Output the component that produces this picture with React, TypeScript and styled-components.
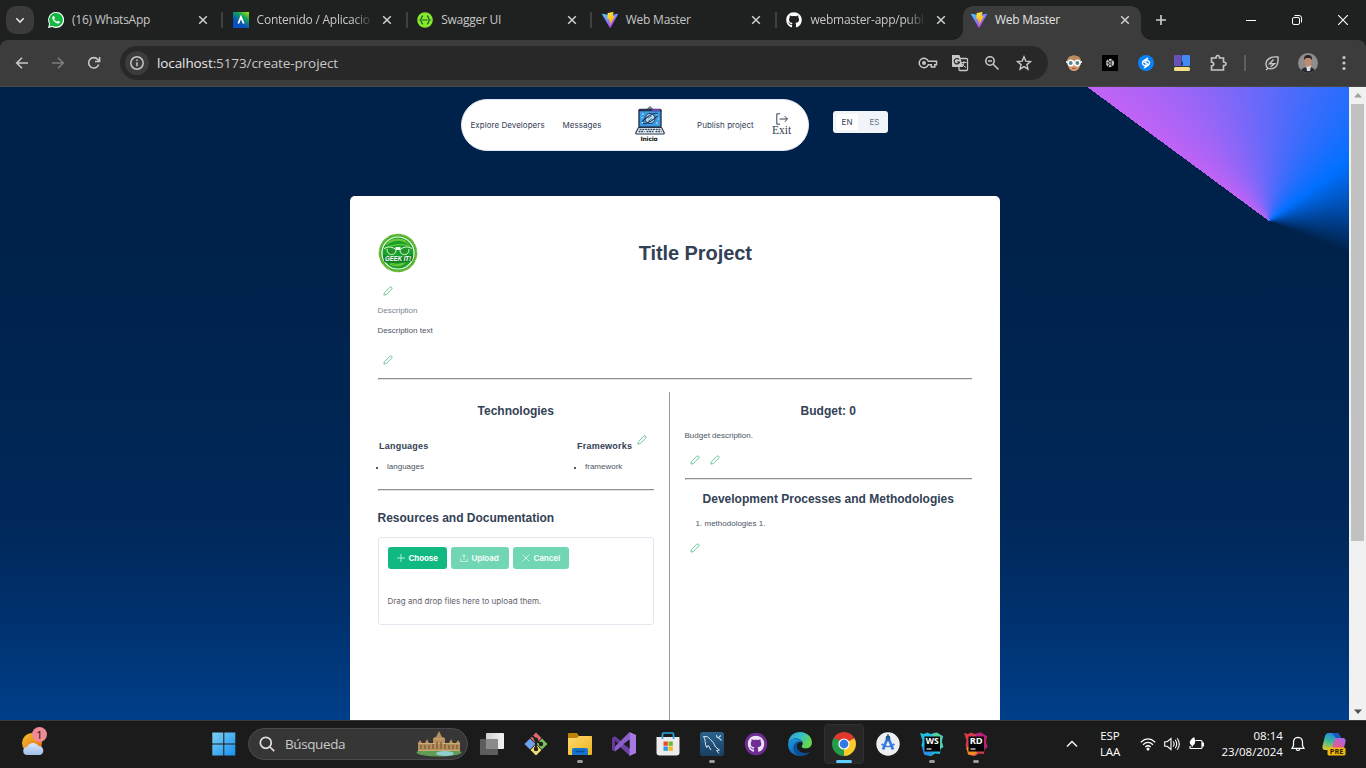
import React from 'react';
import styled, { createGlobalStyle, css } from 'styled-components';
import { FaGithub } from 'react-icons/fa';

const GlobalStyle = createGlobalStyle`
  * { box-sizing: border-box; }
  body { margin: 0; overflow: hidden; font-family: 'Open Sans', 'Noto Sans', sans-serif; }
  svg { display: block; flex: none; }
  h1, h2, h3, p, ul, ol { margin: 0; padding: 0; font-weight: 400; }
`;

const Screen = styled.div`
  width: 1366px;
  height: 768px;
  display: flex;
  flex-direction: column;
  overflow: hidden;
  background: #1f2120;
`;

/* ---------- Browser chrome ---------- */

const TabStrip = styled.div`
  height: 40px;
  flex: none;
  display: flex;
  padding: 6px 0 0 6px;
  background: #1f2120;
`;

const TabSearch = styled.div`
  width: 28px;
  height: 28px;
  margin-right: 6px;
  border-radius: 10px;
  background: #3b3b3b;
  display: flex;
  align-items: center;
  justify-content: center;
`;

const TabSlot = styled.div<{ $active?: boolean }>`
  position: relative;
  flex: none;
  width: ${p => (p.$active ? 178 : 184.6)}px;
  height: ${p => (p.$active ? 34 : 28)}px;
  padding: 0 0 ${p => (p.$active ? 6 : 0)}px 8px;
  display: flex;
  align-items: center;
  color: ${p => (p.$active ? '#e3e3e3' : '#c7c7c7')};
  ${p => p.$active && css`
    background: #3c3c3c;
    border-radius: 10px 10px 0 0;
    &::before, &::after {
      content: '';
      position: absolute;
      bottom: 0;
      width: 10px;
      height: 10px;
    }
    &::before { left: -10px; background: radial-gradient(circle at 0 0, transparent 9.5px, #3c3c3c 10px); }
    &::after { right: -10px; background: radial-gradient(circle at 100% 0, transparent 9.5px, #3c3c3c 10px); }
  `}
`;

const TabTitle = styled.span<{ $fade?: boolean }>`
  width: 114px;
  margin-left: 8px;
  font-size: 12px;
  line-height: 20px;
  letter-spacing: -0.24px;
  white-space: nowrap;
  ${p => p.$fade && css`mask-image: linear-gradient(90deg, #000 96px, transparent 116px);`}
`;

const TabClose = styled.span`
  width: 16px;
  margin-left: 8.5px;
  display: flex;
  justify-content: center;
`;

const TabDivider = styled.span`
  width: 2px;
  height: 16px;
  margin-left: 10.5px;
  background: #3f4140;
`;

const NewTab = styled.div`
  width: 40px;
  height: 28px;
  display: flex;
  align-items: center;
  justify-content: center;
`;

const WindowButtons = styled.div`
  display: flex;
  height: 28px;
  margin-left: auto;
  > div {
    width: 46px;
    display: flex;
    align-items: center;
    justify-content: center;
  }
`;

const ToolbarBack = styled.div`
  height: 47px;
  flex: none;
  background: #1f2120;
`;

const Toolbar = styled.div`
  height: 47px;
  display: flex;
  align-items: center;
  padding: 0 4px;
  background: #3c3c3c;
  border-radius: 8px 8px 0 0;
  border-bottom: 1px solid #474747;
`;

const ToolButton = styled.div<{ $w?: number }>`
  width: ${p => p.$w ?? 36}px;
  height: 34px;
  display: flex;
  align-items: center;
  justify-content: center;
`;

const Omnibox = styled.div`
  width: 928px;
  height: 34px;
  margin: 0 8px;
  padding: 0 8px 0 5px;
  border-radius: 17px;
  background: #282828;
  display: flex;
  align-items: center;
`;

const SiteInfo = styled.div`
  width: 24px;
  height: 24px;
  border-radius: 50%;
  background: #3c3c3c;
  display: flex;
  align-items: center;
  justify-content: center;
`;

const Url = styled.div`
  margin-left: 8px;
  margin-right: auto;
  font-size: 13.5px;
  letter-spacing: -0.1px;
  color: #c7c7c7;
  b { font-weight: 400; color: #e8e8e8; }
`;

const ToolDivider = styled.div`
  width: 2px;
  height: 16px;
  margin: 0 8px;
  background: #5e5e5e;
`;

/* ---------- Web page ---------- */

const Viewport = styled.div`
  height: 633px;
  flex: none;
  display: flex;
`;

const Page = styled.main`
  width: 1349px;
  display: flex;
  flex-direction: column;
  background:
    conic-gradient(from 306.4deg at 1269px 134px, #c063f5 0deg, #0070ff 107deg, #002149 166deg, transparent 166deg) no-repeat 0 0 / 1349px 190px,
    linear-gradient(#002149 0, #002149 150px, #00285a 440px, #003270 540px, #003f8a 633px);
`;

const Header = styled.header`
  display: flex;
  padding: 12px 0 0 461px;
`;

const NavPill = styled.nav`
  width: 348px;
  height: 52px;
  border-radius: 26px;
  border: 1px solid #e2e8f0;
  background: #fff;
  display: flex;
  align-items: center;
  padding-left: 8.5px;
`;

const NavLink = styled.span<{ $w: number }>`
  width: ${p => p.$w}px;
  font: 400 8px Inter, sans-serif;
  letter-spacing: 0.04px;
  line-height: 16px;
  color: #334155;
  white-space: nowrap;
`;

const HomeLogo = styled.div`
  width: 62px;
  height: 38px;
  display: flex;
  flex-direction: column;
  align-items: flex-start;
  span {
    width: 28px;
    text-align: center;
    font: 700 6px/7px 'DejaVu Sans', sans-serif;
    letter-spacing: -0.2px;
    color: #111;
  }
`;

const ExitLink = styled.div`
  width: 24px;
  margin: 0 0 1px 10.5px;
  display: flex;
  flex-direction: column;
  align-items: center;
  font: 11.5px/11px 'Liberation Serif', serif;
  color: #334155;
`;

const LangSwitch = styled.div`
  width: 55px;
  height: 22px;
  margin: 12px 0 0 24px;
  padding: 3px;
  border-radius: 3px;
  background: #f1f5f9;
  display: flex;
`;

const LangOption = styled.span<{ $on?: boolean }>`
  flex: none;
  width: ${p => (p.$on ? 22 : 33)}px;
  height: 16px;
  border-radius: 3px;
  background: ${p => (p.$on ? '#fff' : 'transparent')};
  color: ${p => (p.$on ? '#334155' : '#64748b')};
  font: 8px/16px Inter, sans-serif;
  text-align: center;
`;

const Card = styled.section`
  width: 650px;
  margin: 45px 0 0 350px;
  flex: 1;
  padding: 37px 28px 0 27.5px;
  border-radius: 5px 5px 0 0;
  background: #fff;
  display: flex;
  flex-direction: column;
  font: 8px/20px 'Liberation Sans', Arial, sans-serif;
  color: #4b5563;
`;

const TitleRow = styled.div`
  height: 40px;
  display: flex;
  align-items: center;
`;

const Title = styled.h1`
  flex: 1;
  text-align: center;
  font-weight: 700;
  font-size: 20px;
  letter-spacing: -0.07px;
  padding-left: 1px;
  color: #334155;
`;

const PencilRow = styled.div<{ $top?: number }>`
  height: 20px;
  margin-top: ${p => p.$top ?? 0}px;
  padding-left: 5px;
  display: flex;
  align-items: center;
  gap: 10px;
`;

const Line = styled.p<{ $top?: number; $soft?: boolean }>`
  height: 20px;
  margin-top: ${p => p.$top ?? 0}px;
  color: ${p => (p.$soft ? '#7b8494' : '#4b5563')};
`;

const Rule = styled.div<{ $top: number }>`
  height: 2px;
  flex: none;
  margin-top: ${p => p.$top}px;
  border-top: 1px solid #8f8f8f;
  border-left: 1px solid #8f8f8f;
  border-bottom: 1px solid #e4e4e4;
`;

const Columns = styled.div`
  flex: 1;
  margin-top: 12px;
  display: flex;
`;

const LeftColumn = styled.div`
  width: 292.5px;
  padding-right: 15px;
  border-right: 1px solid #9b9b9b;
`;

const RightColumn = styled.div`
  flex: 1;
  padding-left: 14.5px;
`;

const Heading = styled.h2<{ $top: number; $left?: boolean }>`
  height: 20px;
  margin-top: ${p => p.$top}px;
  text-align: ${p => (p.$left ? 'left' : 'center')};
  font-size: 12px;
  font-weight: 700;
  color: #334155;
  white-space: nowrap;
`;

const TechGrid = styled.div`
  height: 45px;
  margin-top: 11px;
  display: flex;
  > svg { margin-top: 3px; }
`;

const TechGroup = styled.div<{ $w: number }>`
  width: ${p => p.$w}px;
  padding-top: 4px;
  h3 {
    height: 21px;
    padding-left: 1.5px;
    font-size: 9px;
    font-weight: 700;
    letter-spacing: 0.22px;
    color: #334155;
  }
  ul { list-style: none; }
  li { height: 20px; display: flex; align-items: center; }
  li::before {
    content: '';
    width: 2px;
    height: 2px;
    margin: 1px 9.5px 0 -2px;
    background: #4b5563;
  }
`;

const NumberedLine = styled.ol`
  height: 20px;
  margin-top: 5px;
  padding-left: 20px;
`;

const UploadPanel = styled.div`
  height: 88px;
  margin-top: 9px;
  padding: 9px;
  border: 1px solid #e2e8f0;
  border-radius: 3px;
  font: 8px/20px Inter, sans-serif;
  p { margin-top: 22px; color: #64616f; letter-spacing: 0.03px; }
`;

const ButtonRow = styled.div`
  display: flex;
  gap: 4px;
`;

const UploadButton = styled.div<{ $w: number; $off?: boolean }>`
  width: ${p => p.$w}px;
  height: 22px;
  padding-left: 9px;
  display: flex;
  align-items: center;
  gap: 4px;
  border-radius: 3px;
  background: ${p => (p.$off ? '#70d6b3' : '#10b981')};
  color: ${p => (p.$off ? '#f0fbf7' : '#fff')};
  font-weight: 700;
  letter-spacing: -0.1px;
`;

const Scrollbar = styled.div`
  width: 17px;
  padding: 0 2px;
  background: #f1f1f1;
  display: flex;
  flex-direction: column;
  align-items: center;
`;

const ScrollArrow = styled.div`
  height: 17px;
  display: flex;
  align-items: center;
`;

const ScrollThumb = styled.div`
  width: 13px;
  height: 437px;
  margin-bottom: auto;
  background: #c1c1c1;
`;

/* ---------- Taskbar ---------- */

const Taskbar = styled.footer`
  height: 48px;
  flex: none;
  box-shadow: inset 0 1px #3a3a3a;
  background: #1b1b1b;
  display: flex;
  align-items: center;
  color: #fff;
`;

const Weather = styled.div`
  position: relative;
  width: 201px;
  padding-left: 21px;
`;

const Badge = styled.span`
  position: absolute;
  left: 32px;
  top: -5px;
  width: 15px;
  height: 15px;
  border-radius: 50%;
  background: #f08a93;
  color: #111;
  font-size: 11px;
  line-height: 15px;
  text-align: center;
`;

const AppCell = styled.div<{ $active?: boolean; $mark?: boolean }>`
  position: relative;
  width: 44px;
  height: 48px;
  display: flex;
  align-items: center;
  justify-content: center;
  ${p => p.$active && css`
    width: 40px;
    height: 40px;
    margin: 0 2px;
    border-radius: 4px;
    border: 1px solid #303030;
    background: #272727;
  `}
  &::after {
    content: ${p => (p.$mark || p.$active ? "''" : 'none')};
    position: absolute;
    bottom: ${p => (p.$active ? 0 : 5)}px;
    width: ${p => (p.$active ? 16 : 6)}px;
    height: 3px;
    border-radius: 2px;
    background: ${p => (p.$active ? '#60cdff' : '#9a9a9a')};
  }
`;

const SearchPill = styled.div`
  width: 220px;
  height: 32px;
  margin: 0 2px 0 3px;
  padding: 0 5px 0 10px;
  border-radius: 16px;
  border: 1px solid #4a4a4a;
  background: #363636;
  display: flex;
  align-items: center;
  font-size: 13.5px;
  letter-spacing: -0.4px;
  color: #c8c8c8;
  span { margin-left: 10px; margin-right: auto; }
`;

const Tray = styled.div`
  margin-left: auto;
  width: 306px;
  display: flex;
  align-items: center;
`;

const TrayIcon = styled.div<{ $w: number }>`
  width: ${p => p.$w}px;
  display: flex;
  justify-content: center;
`;

const TrayText = styled.div<{ $w: number; $right?: boolean }>`
  width: ${p => p.$w}px;
  font-size: 11.5px;
  line-height: 16px;
  letter-spacing: ${p => (p.$right ? 0.05 : -0.1)}px;
  text-align: ${p => (p.$right ? 'right' : 'center')};
  white-space: pre-line;
`;

/* ---------- Icons ---------- */

const Stroke = ({ size = 16, color = '#c7c7c7', w = 1.6, children }: { size?: number; color?: string; w?: number; children: React.ReactNode }) => (
  <svg width={size} height={size} viewBox="0 0 16 16" fill="none" stroke={color} strokeWidth={w}>{children}</svg>
);

const CrossIcon = () => (
  <svg width="10" height="10" viewBox="0 0 10 10" stroke="#d0d0d0" strokeWidth="1.5"><path d="M1.2 1.2l7.6 7.6M8.8 1.2L1.2 8.8" /></svg>
);

const ViteIcon = () => (
  <svg width="16" height="16" viewBox="0 0 32 32">
    <defs>
      <linearGradient id="va" x1="0" y1="0" x2="0.6" y2="1"><stop offset="0" stopColor="#41d1ff" /><stop offset="1" stopColor="#bd34fe" /></linearGradient>
      <linearGradient id="vb" x1="0.4" y1="0" x2="0.6" y2="1"><stop offset="0" stopColor="#ffea83" /><stop offset="0.1" stopColor="#ffdd35" /><stop offset="1" stopColor="#ffa800" /></linearGradient>
    </defs>
    <path fill="url(#va)" d="M31.9 4.8L17 31.4c-.3.5-1.1.5-1.4 0L.3 4.8c-.3-.6.2-1.3.9-1.2l15 2.7 14.8-2.7c.6-.1 1.200.6.9 1.200z" />
    <path fill="url(#vb)" d="M22.700 0L11.700 2.200c-.2 0-.3.2-.3.4l-.7 11.500c0 .3.2.5.5.4l3.100-.7c.3-.1.5.2.5.5l-.9 4.500c-.1.3.2.500.5.500l1.900-.6c.3-.1.6.2.5.5l-1.400 7c-.1.4.5.7.7.3l9.100-18.100c.1-.3-.1-.6-.4-.5l-3.200.6c-.3.1-.600-.2-.500-.500L23.100.500c.1-.3-.1-.5-.4-.5z" />
  </svg>
);

const WhatsIcon = () => (
  <svg width="16" height="16" viewBox="0 0 16 16">
    <path d="M0 16l1.100-4.200A8 8 0 1 1 4.300 15z" fill="#fff" />
    <path d="M1.400 14.600l.8-3A6.900 6.900 0 1 1 4.500 13.800z" fill="#12b83f" />
    <path d="M5.700 4c-.5-.1-1.500.6-1.400 2 .2 2.300 3.300 5.300 5.600 5.600 1.200.1 2-.7 2-1.600 0-.4-1.700-1.300-2-1.100l-.8.9C7.600 9.300 6.500 8.100 6.100 7l.8-1C6.900 5.500 6.200 4.200 5.700 4z" fill="#fff" />
  </svg>
);

const AppwareIcon = () => (
  <svg width="16" height="16" viewBox="0 0 16 16">
    <defs><linearGradient id="aw" x1="0.9" y1="0" x2="0.3" y2="0.9"><stop offset="0" stopColor="#9be013" /><stop offset="0.35" stopColor="#12a05c" /><stop offset="0.8" stopColor="#0a4fc0" /></linearGradient></defs>
    <path d="M0 0h16v16H0z" fill="url(#aw)" />
    <path d="M5.300 11.500L8 4.800l2.700 6.700" stroke="#fff" strokeWidth="1.800" fill="none" />
  </svg>
);

const SwaggerIcon = () => (
  <svg width="16" height="16" viewBox="0 0 16 16">
    <circle cx="8" cy="8" r="7.800" fill="#85ea2d" />
    <path d="M6 4C4 4 5 7.500 3.300 8 5 8.500 4 12 6 12M10 4c2 0 1 3.500 2.700 4C11 8.500 12 12 10 12" fill="none" stroke="#27592c" strokeWidth="1.300" />
    <path d="M5.500 8h5" stroke="#27592c" strokeWidth="1.300" strokeDasharray="1.300 .5" />
  </svg>
);

const Pencil = () => (
  <svg width="10" height="10" viewBox="0 0 10 10" fill="none" stroke="#63bd91" strokeWidth="0.9" strokeLinejoin="round">
    <path d="M.9 9.100l.5-2.300L6.900 1.200Q7.900.5 8.700 1.300 9.500 2.100 8.800 3.100L3.200 8.600z" />
  </svg>
);

const LaptopLogo = () => (
  <svg width="30" height="29" viewBox="0 0 30 29">
    <path d="M12.500 3l2.500-2.400L17.500 3z" fill="#fff" stroke="#263247" />
    <rect x="3.300" y="2.800" width="23.400" height="18.700" rx="1.500" fill="#24344d" />
    <rect x="4.700" y="5.300" width="20.600" height="15" fill="#3a9be6" />
    <path d="M17 4h8" stroke="#8b48c6" strokeWidth="1.500" />
    <circle cx="15" cy="12.500" r="5" fill="#b7dcf6" stroke="#22364f" />
    <ellipse cx="15" cy="12.500" rx="8.700" ry="2.700" transform="rotate(-32 15 12.500)" fill="none" stroke="#22364f" strokeWidth="1" />
    <path d="M11.500 10.500l2 1.500 3-2M13 15.500l4-3M16 15l2-2" stroke="#3a5878" fill="none" strokeWidth=".8" />
    <path d="M7 8h1.500M21 17h1.500M22 8v1.500M7.500 16v1.500M6.500 11.500h1M23 13h1" stroke="#e9f6ff" />
    <path d="M3.500 21.500h23l2.800 5.500q0 1-1 1H1.700q-1 0-1-1z" fill="#e9f1f7" stroke="#26354b" strokeWidth="1.100" />
    <path d="M4.500 23.300h21M3.500 25.500h6M11.500 25.500h7M20.500 25.500h6" stroke="#35475e" strokeWidth="1.300" strokeDasharray="2 .7" />
  </svg>
);

const GeekLogo = () => (
  <svg width="40" height="40" viewBox="0 0 40 40">
    <circle cx="20" cy="20" r="18.300" fill="#3bae27" stroke="#62b836" strokeWidth="2" strokeDasharray="7 .5" />
    <circle cx="20" cy="20" r="16" fill="#18a22c" stroke="#f4fff0" strokeWidth="1.200" />
    <path d="M8 12q11-9 23-1M7 16q10-7 25-3M9 28q11 7 22-1M12 31q8 4 15-1M10 9q9-5 18-1" fill="none" stroke="#6fc838" strokeWidth="1.200" />
    <path d="M6 15.500q6-3.500 12 1 2-1.500 4 0 6-4.500 12-1M9 16q0 5.500 4.500 5.500T18 16.500M22 16.500q0 5 4.500 5T31 16" fill="#23912c" stroke="#d4f5cc" strokeWidth="1" />
    <path d="M17.500 14h5v3h-5z" fill="#f1fff0" />
    <path d="M4.800 22q15 5 30.400-1l-1 7q-14 4-28 1z" fill="#138326" />
    <text x="20" y="28" textAnchor="middle" fontFamily="Liberation Sans" fontWeight="700" fontStyle="italic" fontSize="7.200" fill="#fff" textLength="26" lengthAdjust="spacingAndGlyphs">GEEK IT!</text>
  </svg>
);

const WeatherIcon = () => (
  <svg width="24" height="24" viewBox="0 0 24 24">
    <defs><linearGradient id="sun" x1="0" y1="0" x2="1" y2="1"><stop stopColor="#f2c12c" /><stop offset="1" stopColor="#e8650f" /></linearGradient>
      <linearGradient id="cloud" x1="0" y1="0" x2="0" y2="1"><stop stopColor="#d9e6fa" /><stop offset="1" stopColor="#9fbeea" /></linearGradient></defs>
    <circle cx="11" cy="11" r="10" fill="url(#sun)" />
    <path d="M6.500 23a4 4 0 0 1-.5-8 6.500 6.500 0 0 1 11.500-1 4.600 4.600 0 0 1 1.500 9z" fill="url(#cloud)" />
  </svg>
);

const StartIcon = () => (
  <svg width="25" height="24" viewBox="0 0 24 24">
    <defs><linearGradient id="win" x1="0" y1="0" x2="1" y2="1"><stop stopColor="#7fd0f3" /><stop offset="1" stopColor="#1591ef" /></linearGradient></defs>
    <path fill="url(#win)" d="M.8.500h11v11H.8zM12.800.500h11v11h-11zM.8 12.500h11v11H.8zM12.800 12.500h11v11h-11z" />
  </svg>
);

const PalaceIcon = () => (
  <svg width="46" height="26" viewBox="0 0 46 26">
    <ellipse cx="23" cy="21.500" rx="22.500" ry="4" fill="#5f9b52" />
    <ellipse cx="29" cy="22.500" rx="9" ry="2.500" fill="#8fcfd0" />
    <path d="M2 20V12l2-3 2 3h3l2-4 2 4h4V7l3-1 3-6 3 6 3 1v5h4l2-4 2 4h3l2-3 2 3v8z" fill="#b58e5e" />
    <path d="M2 12.500h42M18 8h10M2 19.500h42" stroke="#d3b07a" strokeWidth=".8" />
    <path d="M5 14v4M9 14v4M13 14v4M17 13v5M21 11v7M25 11v7M29 13v5M33 14v4M37 14v4M41 14v4" stroke="#7d5a37" strokeWidth="1.300" />
  </svg>
);

const TaskViewIcon = () => (
  <svg width="24" height="24" viewBox="0 0 24 24">
    <defs><linearGradient id="tvw"><stop stopColor="#cfcfcf" /><stop offset="1" stopColor="#f4f4f4" /></linearGradient></defs>
    <rect x="6" y="1" width="18" height="16" rx="1" fill="url(#tvw)" /><rect x="0" y="7" width="18" height="16" rx="1" fill="#5d5d5d" /><path d="M6 7h12v10H6z" fill="#8b8b8b" />
  </svg>
);

const GitIcon = () => (
  <svg width="26" height="26" viewBox="0 0 26 26">
    <path d="M13 1.500l5.500 5.500L13 12.500 7.500 7z" fill="#e0696b" /><path d="M19 7.500l5.500 5.500L19 18.500 13.500 13z" fill="#7cc057" />
    <path d="M7 7.500L12.500 13 7 18.500 1.500 13z" fill="#6ea2ea" /><path d="M13 13.500l5.500 5.500L13 24.500 7.500 19z" fill="#f2dc74" />
    <path d="M8 3.500l5 5v9M13 9l5 4" fill="none" stroke="#20201f" strokeWidth="1.800" />
    <circle cx="13" cy="8.500" r="2" fill="#20201f" /><circle cx="13" cy="18" r="2.200" fill="#20201f" /><circle cx="18" cy="13" r="2.200" fill="#20201f" />
  </svg>
);

const FolderIcon = () => (
  <svg width="26" height="24" viewBox="0 0 26 24">
    <defs><linearGradient id="fo" x1="0" y1="0" x2="1" y2="1"><stop stopColor="#ffd970" /><stop offset="1" stopColor="#edb31c" /></linearGradient></defs>
    <path d="M1 2q0-1 1-1h8l2 3h12q1 0 1 1v6H1z" fill="#bd8207" /><path d="M1 6h9l2-2h12q1 0 1 1v17q0 1-1 1H2q-1 0-1-1z" fill="url(#fo)" />
    <path d="M5 23v-5q0-2 2-2h12q2 0 2 2v5z" fill="#1674cc" /><path d="M8.500 19.500h9" stroke="#0b4b96" strokeWidth="1.500" />
  </svg>
);

const VisualStudioIcon = () => (
  <svg width="26" height="26" viewBox="0 0 26 26">
    <path d="M1 7l3-1.500 15 12V25L1.500 9z" fill="#6d42a5" /><path d="M1 7l3-1.500 5 4v7l-5 4L1 19z" fill="#65399c" />
    <path d="M4 9.500L7.500 13 4 16.500z" fill="#1b1b1b" /><path d="M18.500 1L4 15.500v5L19 8.500z" fill="#8c5dcc" />
    <path d="M18.500 1L25 4v18l-6.500 3z" fill="#a678e3" /><path d="M18.500 8.500v9L12.500 13z" fill="#1b1b1b" />
  </svg>
);

const StoreIcon = () => (
  <svg width="24" height="24" viewBox="0 0 24 24">
    <path d="M.5 5h23v15.500Q23.500 23.500 20.500 23.500h-17Q.5 23.500.5 20.500z" fill="#ececec" />
    <path d="M6.500 7V2q0-1 1-1h9q1 0 1 1v5" fill="none" stroke="#27a9e1" strokeWidth="1.700" />
    <path d="M7.500 9.500h4.300v4.300H7.500z" fill="#e84b26" /><path d="M12.500 9.500h4.300v4.300h-4.300z" fill="#75b82a" /><path d="M7.500 14.500h4.300v4.300H7.500z" fill="#2a9be0" /><path d="M12.500 14.500h4.300v4.300h-4.300z" fill="#f5b81d" />
  </svg>
);

const MysqlIcon = () => (
  <svg width="24" height="24" viewBox="0 0 24 24">
    <defs><linearGradient id="my" x1="0" y1="0" x2="0" y2="1"><stop stopColor="#2b628c" /><stop offset="1" stopColor="#173f61" /></linearGradient></defs>
    <rect width="24" height="24" rx="2.500" fill="url(#my)" />
    <path d="M3.500 4.500q4.500-1 7 3 3.500 3 5 7.500l4 3-3 .5 2.500 3M3.500 4.500q1.500 2 1.700 5 0 3.500 1.500 6l1.500-2 2.800 4.500" fill="none" stroke="#dbe9f2" strokeWidth="1" />
    <path d="M16.500 3q0 3 2.500 3l2.500 2.500M18.500 5.500l2.500-2" stroke="#bcd4e2" strokeWidth="1.100" fill="none" />
  </svg>
);

const GithubDesktopIcon = () => (
  <svg width="24" height="24" viewBox="0 0 24 24">
    <circle cx="12" cy="12" r="11.200" fill="#702c95" />
    <circle cx="12" cy="12" r="7.500" fill="#702c95" />
    <FaGithub x="3.500" y="3.500" size={17} color="#ece2f3" />
  </svg>
);

const EdgeIcon = () => (
  <svg width="26" height="26" viewBox="0 0 24 24">
    <defs>
      <linearGradient id="e1" x1="0" y1="0" x2="1" y2=".4"><stop stopColor="#2e9be0" /><stop offset=".55" stopColor="#35c1c9" /><stop offset="1" stopColor="#66d74b" /></linearGradient>
      <linearGradient id="e2" x1="0" y1="0" x2=".7" y2="1"><stop stopColor="#1d9ae0" /><stop offset="1" stopColor="#0a5cb0" /></linearGradient>
    </defs>
    <path d="M1 11C2 4.500 6.500 1 12 1c6.500 0 11 4.700 11 9.500 0 3.500-2.500 5.500-5.500 5.500-3 0-4-1-4-1.800 0-.7 1-1.200 1-2.900C14.500 9 11.500 7 8.500 7 5 7 2 9 1 11z" fill="url(#e1)" />
    <path d="M1 12C1.500 8.500 5 6.500 8.500 7c3 .2 5 1.700 5.800 3.500-2.300-1.500-5.300.5-5.300 3.500 0 4 4 6.500 8 6.500 1.800 0 3.300-.5 4.500-1.500C19.500 21.500 16 23 12 23 5.500 23 .5 18 1 12z" fill="url(#e2)" />
    <path d="M9 14c0 4 4 6.500 8 6.500 1.800 0 3.300-.5 4.500-1.500C19.500 21.500 16 23 12 23c-4-.5-6.500-4-6-7.500C6.300 12 8 9.500 12 9.700 10 10.500 9 12 9 14z" fill="#0b4f96" />
  </svg>
);

const ChromeIcon = () => (
  <svg width="24" height="24" viewBox="0 0 24 24">
    <path d="M12 12L1.610 6A12 12 0 0 1 22.390 6z" fill="#df382c" /><path d="M12 12L1.610 6A12 12 0 0 0 12 24z" fill="#249d4a" /><path d="M12 12V24A12 12 0 0 0 22.390 6z" fill="#fbcb2b" />
    <path d="M12 6.500h10.600L22.390 6 12 5.200z" fill="#df382c" /><path d="M1.610 6l5.600 8.800L9 9z" fill="#249d4a" /><path d="M12 24l5-9.300L12 17z" fill="#fbcb2b" />
    <circle cx="12" cy="12" r="5.600" fill="#fff" /><circle cx="12" cy="12" r="4.400" fill="#3478e5" />
  </svg>
);

const AndroidStudioIcon = () => (
  <svg width="24" height="24" viewBox="0 0 24 24">
    <circle cx="12" cy="12" r="11.700" fill="#edf0f3" />
    <path d="M12 5L7 17.500M12 5l5 12.500" stroke="#3a7cdb" strokeWidth="2.800" /><path d="M5.500 12q6.500 5 13 0" stroke="#3a7cdb" strokeWidth="1.700" fill="none" />
    <circle cx="12" cy="6" r="2.400" fill="#265ca8" /><circle cx="12" cy="12.500" r="1.600" fill="#eef" /><path d="M12 2v3" stroke="#333" />
  </svg>
);

const JetIcon = ({ label, colors }: { label: string; colors: string[] }) => (
  <svg width="24" height="24" viewBox="0 0 24 24">
    <path d="M0 1l4 1 3-1.500 4 1.500 5-1.500 1 2 6 1.500-1 6 1.500 5-3 2-.5 5-5-.5-4 2.500-6-1-1-4.500-2.500-5 1-5z" fill={colors[0]} />
    <path d="M12 2l5-1.500 5.500 3.500-1 6 1.500 5-3 2-6-3z" fill={colors[1]} /><path d="M2 16l9-5 2 10-3 2.500-6-1-1-4z" fill={colors[2]} />
    <path d="M4.500 4.500h15.500v15H4.500z" fill="#050505" />
    <text x="5.700" y="11.800" fontFamily="Open Sans" fontWeight="700" fontSize="8" fill="#fff" textLength="13" lengthAdjust="spacingAndGlyphs">{label}</text>
    <path d="M6.500 17h5" stroke="#ddd" strokeWidth="1.300" />
  </svg>
);

const CopilotIcon = () => (
  <svg width="24" height="24" viewBox="0 0 24 24">
    <defs><linearGradient id="c1" x1=".6" y1="0" x2=".3" y2="1"><stop stopColor="#2285e8" /><stop offset=".5" stopColor="#3bb89a" /><stop offset="1" stopColor="#d2ca31" /></linearGradient>
      <linearGradient id="c2" x1=".8" y1="0" x2=".2" y2="1"><stop stopColor="#a868ed" /><stop offset=".6" stopColor="#e3578f" /><stop offset="1" stopColor="#f2865c" /></linearGradient></defs>
    <path d="M6 1h9q2 0 3 3l.8 2h-4L11 16q-.7 2-3 2H3q-3 0-2.500-4L3 4q1-3 3-3z" fill="url(#c1)" />
    <path d="M10 1h5q2 0 3 3l.8 2h-4q-1.500 0-2-1.500z" fill="#1a57b8" />
    <path d="M14.800 6H21q3 0 2.500 4L21 19q-1 3-4 3h-5q-3 0-2-4l2-9q1-3 2.800-3z" fill="url(#c2)" />
    <rect x="5.500" y="15.500" width="18" height="8" rx="1.500" fill="#f3b90f" />
    <text x="7.800" y="22" fontFamily="Open Sans" fontWeight="700" fontSize="6.500" fill="#2c2303" textLength="13.500" lengthAdjust="spacingAndGlyphs">PRE</text>
  </svg>
);

const tabs = [
  { title: '(16) WhatsApp', icon: <WhatsIcon /> },
  { title: 'Contenido / Aplicacio', icon: <AppwareIcon />, fade: true },
  { title: 'Swagger UI', icon: <SwaggerIcon /> },
  { title: 'Web Master', icon: <ViteIcon /> },
  { title: 'webmaster-app/publi', icon: <FaGithub size={16} color="#fff" />, fade: true },
  { title: 'Web Master', icon: <ViteIcon />, active: true },
];

const BrowserTabs = () => (
  <TabStrip>
    <TabSearch><Stroke color="#e3e3e3"><path d="M4.300 6.300L8 10l3.700-3.700" /></Stroke></TabSearch>
    {tabs.map((t, i) => (
      <TabSlot key={i} $active={t.active}>
        {t.icon}
        <TabTitle $fade={t.fade}>{t.title}</TabTitle>
        <TabClose><CrossIcon /></TabClose>
        {!t.active && i !== 4 && <TabDivider />}
      </TabSlot>
    ))}
    <NewTab><Stroke color="#d0d0d0"><path d="M3 8h10M8 3v10" /></Stroke></NewTab>
    <WindowButtons>
      <div><Stroke color="#fff" w={1}><path d="M3 8.500h10" /></Stroke></div>
      <div><Stroke color="#fff" w={1}><rect x="3.500" y="5.500" width="7" height="7" rx="1.500" /><path d="M5.500 3.500h4.500q2.500 0 2.500 2.500v4.500" /></Stroke></div>
      <div><Stroke color="#fff" w={1.100}><path d="M3.200 3.200l9.600 9.600M12.800 3.200l-9.600 9.600" /></Stroke></div>
    </WindowButtons>
  </TabStrip>
);

const BrowserToolbar = () => (
  <ToolbarBack>
    <Toolbar>
      <ToolButton><Stroke><path d="M14 8H3M8 2.700L2.700 8 8 13.300" /></Stroke></ToolButton>
      <ToolButton><Stroke color="#7c7c7c"><path d="M2 8h11M8 2.700L13.300 8 8 13.300" /></Stroke></ToolButton>
      <ToolButton><Stroke><path d="M12.700 9.500A5.200 5.200 0 1 1 11.800 4.500l1.500 1.800M13.600 2v4.500H9" /></Stroke></ToolButton>
      <Omnibox>
        <SiteInfo><Stroke w={1.500}><circle cx="8" cy="8" r="6.200" /><path d="M8 7.300v4M8 4.400v1.500" /></Stroke></SiteInfo>
        <Url><b>localhost</b>:5173/create-project</Url>
        <ToolButton $w={32}><svg width="20" height="12" viewBox="0 0 20 12" fill="none" stroke="#c7c7c7" strokeWidth="1.500"><path d="M10.300 4.300A4.700 4.700 0 1 0 10.300 7.700h3V10h3.500V7.700H18.500V4.300z" /><circle cx="6" cy="6" r="1.200" fill="#c7c7c7" /></svg></ToolButton>
        <ToolButton $w={32}>
          <svg width="18" height="18" viewBox="0 0 18 18"><rect x="8" y="4.500" width="8.500" height="12" rx="1" fill="none" stroke="#c7c7c7" strokeWidth="1.300" /><path d="M1 1h7.500l3.500 12H2q-1 0-1-1z" fill="#c7c7c7" /><path d="M8 5.500A2.700 2.700 0 1 0 8.500 8H6" fill="none" stroke="#282828" strokeWidth="1.200" /><path d="M10.500 8.500h5M13 7v1.500q-.5 3-2.500 4.500M11 9.500q1.500 3 4 4" fill="none" stroke="#c7c7c7" /></svg>
        </ToolButton>
        <ToolButton $w={32}><Stroke><circle cx="6" cy="6" r="4.200" /><path d="M9.200 9.200l5.300 5.300M4 6h4" /></Stroke></ToolButton>
        <ToolButton $w={32}><Stroke w={1.400}><path d="M8 1.800l1.800 4.300 4.700.4-3.600 3.100 1.100 4.600L8 11.700l-4 2.500 1.100-4.600L1.500 6.500l4.700-.4z" /></Stroke></ToolButton>
      </Omnibox>
      <ToolButton>
        <svg width="16" height="16" viewBox="0 0 16 16"><path d="M1 7q0-6.500 7-6.500T15 7l-1.500 5q-1.500 4-5.500 4t-5.500-4z" fill="#d99b70" /><path d="M1 6.500Q1.500.5 8 .5t7 6z" fill="#b98a5e" /><path d="M0 7h16" stroke="#cfd6d8" strokeWidth="2" /><circle cx="4.700" cy="8" r="2.700" fill="#57868f" stroke="#fff" strokeWidth="1.500" /><circle cx="11.300" cy="8" r="2.700" fill="#57868f" stroke="#fff" strokeWidth="1.500" /><path d="M6 13.300h4" stroke="#a34b38" /></svg>
      </ToolButton>
      <ToolButton><svg width="16" height="16" viewBox="0 0 16 16"><path d="M0 0h16v16H0z" /><circle cx="8" cy="8" r="3" fill="none" stroke="#bbb" strokeWidth="2.400" strokeDasharray="2.500 .7" /><circle cx="8" cy="8" r="1.500" fill="#888" /></svg></ToolButton>
      <ToolButton><svg width="16" height="16" viewBox="0 0 16 16"><circle cx="8" cy="8" r="8" fill="#0a80f5" /><path d="M9.600 3.300L6 5.700Q3.200 8 5.500 10q1.200 1 2.700 0M6.400 12.700L10 10.300q2.800-2.300.5-4.300-1.200-1-2.700 0M6.700 7.200l2.600 1.700" fill="none" stroke="#fff" strokeWidth="1.500" strokeLinecap="round" /></svg></ToolButton>
      <ToolButton><svg width="16" height="16" viewBox="0 0 16 16"><rect width="7.500" height="11" rx="1" fill="#6652b8" /><rect x="8" width="8" height="11" rx="1" fill="#4389f5" /><path d="M7 6l2 1v3H7z" fill="#25366b" /><rect y="12" width="16" height="4" rx="1.500" fill="#f5df8a" /></svg></ToolButton>
      <ToolButton><svg width="18" height="18" viewBox="0 0 18 18" fill="none" stroke="#c7c7c7" strokeWidth="1.600"><path d="M2.500 4H7q0-2.500 1.800-2.500T10.500 4h4v4q2.500 0 2.500 1.800T14.500 11.500V16h-12v-4q2.200-.3 2.200-2T2.500 8z" /></svg></ToolButton>
      <ToolDivider />
      <ToolButton><Stroke w={1.400}><path d="M14 2Q5 1 2.500 6.500 1 11 4 13.200 8 15 11.500 12 14.500 9 14 2zM4 13.200L2 15M9.500 4.500L5.500 8.700h5L6.500 12" /></Stroke></ToolButton>
      <ToolButton>
        <svg width="20" height="20" viewBox="0 0 20 20"><defs><clipPath id="av"><circle cx="10" cy="10" r="10" /></clipPath></defs><g clipPath="url(#av)"><path d="M0 0h20v20H0z" fill="#8f8d8b" /><path d="M2 20q1-6 8-6t8 6z" fill="#272a32" /><path d="M8 12h5l-1 6H9z" fill="#e2dfdb" /><ellipse cx="10" cy="8.500" rx="3.600" ry="5.200" fill="#bd8b70" /><path d="M6 7q-.5-5 4-5t4 5l-2-2H8z" fill="#2c2523" /></g></svg>
      </ToolButton>
      <ToolButton><svg width="4" height="16" viewBox="0 0 4 16" fill="#c7c7c7"><circle cx="2" cy="2.500" r="1.600" /><circle cx="2" cy="8" r="1.600" /><circle cx="2" cy="13.500" r="1.600" /></svg></ToolButton>
    </Toolbar>
  </ToolbarBack>
);

const ProjectCard = () => (
  <Card>
    <TitleRow><GeekLogo /><Title>Title Project</Title></TitleRow>
    <PencilRow $top={8}><Pencil /></PencilRow>
    <Line $soft>Description</Line>
    <Line>Description text</Line>
    <PencilRow $top={9}><Pencil /></PencilRow>
    <Rule $top={8} />
    <Columns>
      <LeftColumn>
        <Heading $top={9}>Technologies</Heading>
        <TechGrid>
          <TechGroup $w={198}><h3>Languages</h3><ul><li>languages</li></ul></TechGroup>
          <TechGroup $w={61}><h3>Frameworks</h3><ul><li>framework</li></ul></TechGroup>
          <Pencil />
        </TechGrid>
        <Rule $top={12} />
        <Heading $top={17} $left>Resources and Documentation</Heading>
        <UploadPanel>
          <ButtonRow>
            <UploadButton $w={59}><Stroke size={8} color="#d9f7eb" w={1.500}><path d="M0 8h16M8 0v16" /></Stroke>Choose</UploadButton>
            <UploadButton $w={58} $off><Stroke size={8} color="#e5f9f1" w={1.500}><path d="M1 9v6h14V9M8 12V1M4 5l4-4 4 4" /></Stroke>Upload</UploadButton>
            <UploadButton $w={56} $off><Stroke size={8} color="#e5f9f1" w={1.500}><path d="M1 1l14 14M15 1L1 15" /></Stroke>Cancel</UploadButton>
          </ButtonRow>
          <p>Drag and drop files here to upload them.</p>
        </UploadPanel>
      </LeftColumn>
      <RightColumn>
        <Heading $top={9}>Budget: 0</Heading>
        <Line $top={5}>Budget description.</Line>
        <PencilRow $top={4}><Pencil /><Pencil /></PencilRow>
        <Rule $top={8} />
        <Heading $top={9}>Development Processes and Methodologies</Heading>
        <NumberedLine><li>methodologies 1.</li></NumberedLine>
        <PencilRow $top={4}><Pencil /></PencilRow>
      </RightColumn>
    </Columns>
  </Card>
);

export default function App() {
  return (
    <Screen>
      <GlobalStyle />
      <BrowserTabs />
      <BrowserToolbar />
      <Viewport>
        <Page>
          <Header>
            <NavPill>
              <NavLink $w={92}>Explore Developers</NavLink>
              <NavLink $w={72.500}>Messages</NavLink>
              <HomeLogo><LaptopLogo /><span>Inicio</span></HomeLogo>
              <NavLink $w={62}>Publish project</NavLink>
              <ExitLink>
                <svg width="12" height="12" viewBox="0 0 12 12" fill="none" stroke="#334155" strokeWidth="1"><path d="M4 .8H.8v10.400H4M3.500 6H11.300M8.700 3.200L11.500 6 8.700 8.800" /></svg>
                Exit
              </ExitLink>
            </NavPill>
            <LangSwitch><LangOption $on>EN</LangOption><LangOption>ES</LangOption></LangSwitch>
          </Header>
          <ProjectCard />
        </Page>
        <Scrollbar>
          <ScrollArrow><svg width="8" height="5" viewBox="0 0 8 5"><path d="M4 0l4 4.500H0z" fill="#a0a0a0" /></svg></ScrollArrow>
          <ScrollThumb />
          <ScrollArrow><svg width="8" height="5" viewBox="0 0 8 5"><path d="M0 .5h8L4 5z" fill="#505050" /></svg></ScrollArrow>
        </Scrollbar>
      </Viewport>
      <Taskbar>
        <Weather><WeatherIcon /><Badge>1</Badge></Weather>
        <AppCell><StartIcon /></AppCell>
        <SearchPill>
          <Stroke color="#e0e0e0" w={1.700}><circle cx="6.800" cy="6.800" r="5.500" /><path d="M11 11l4.200 4.200" /></Stroke>
          <span>Búsqueda</span>
          <PalaceIcon />
        </SearchPill>
        <AppCell><TaskViewIcon /></AppCell>
        <AppCell><GitIcon /></AppCell>
        <AppCell $mark><FolderIcon /></AppCell>
        <AppCell><VisualStudioIcon /></AppCell>
        <AppCell><StoreIcon /></AppCell>
        <AppCell $mark><MysqlIcon /></AppCell>
        <AppCell><GithubDesktopIcon /></AppCell>
        <AppCell><EdgeIcon /></AppCell>
        <AppCell $active><ChromeIcon /></AppCell>
        <AppCell><AndroidStudioIcon /></AppCell>
        <AppCell $mark><JetIcon label="WS" colors={['#20bde0', '#4fd0a0', '#2c8fe9']} /></AppCell>
        <AppCell $mark><JetIcon label="RD" colors={['#d43a4f', '#b51f85', '#f18b27']} /></AppCell>
        <Tray>
          <TrayIcon $w={24}><Stroke color="#fff" w={1.300}><path d="M3 10.500l5-5 5 5" /></Stroke></TrayIcon>
          <TrayText $w={52}>{'ESP\nLAA'}</TrayText>
          <TrayIcon $w={24}><Stroke color="#fff" w={1.200}><path d="M.8 6.200q7.200-6.500 14.400 0M3 8.700q5-4.600 10 0M5.300 11q2.700-2.500 5.400 0" /><circle cx="8" cy="13" r=".9" fill="#fff" /></Stroke></TrayIcon>
          <TrayIcon $w={24}><Stroke color="#fff" w={1.100}><path d="M.7 5.700h2.500L7 2.500v11L3.200 10.300H.7zM9.200 5.500q1.800 2.500 0 5M11.200 3.800q3 4.200 0 8.400M13.200 2.200q4.200 5.800 0 11.600" /></Stroke></TrayIcon>
          <TrayIcon $w={24}><Stroke color="#fff" w={1.200}><path d="M7.500 4.500H13q1 0 1 1v6q0 1-1 1H3q-1 0-1-1V10M14.500 7v3h1V7z" /><path d="M6 1q3 6-1 8.500l-1 2-.5-2Q-1 6 6 1z" fill="#fff" stroke="none" /></Stroke></TrayIcon>
          <TrayText $w={75} $right>{'08:14\n23/08/2024'}</TrayText>
          <TrayIcon $w={30}><Stroke color="#fff" w={1.200}><path d="M8 1.300Q3.700 1.500 3.500 6v3.500L2 12.300h12L12.500 9.500V6Q12.300 1.500 8 1.300zM6 12.500q.3 2 2 2t2-2" /></Stroke></TrayIcon>
          <TrayIcon $w={42}><CopilotIcon /></TrayIcon>
        </Tray>
      </Taskbar>
    </Screen>
  );
}
